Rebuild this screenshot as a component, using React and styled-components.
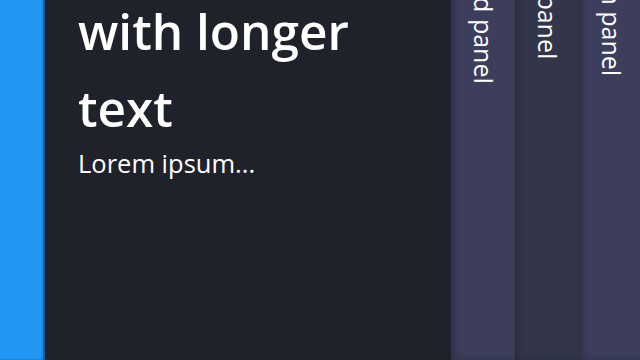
import React, { useLayoutEffect, useRef } from 'react';
import styled, { createGlobalStyle } from 'styled-components';

const GlobalStyle = createGlobalStyle`
  html, body {
    margin: 0;
    padding: 0;
    background: #1f212b;
    font-family: "Open Sans", "Liberation Sans", sans-serif;
    overflow: hidden;
  }
`;

const Viewport = styled.div`
  height: 100vh;
  overflow: hidden;
`;

const Stage = styled.div`
  display: flex;
  height: 444px;
`;

const SideBar = styled.div`
  flex: 0 0 45px;
  background: #2196f3;
  box-shadow: inset -2px 0 2px rgba(10, 40, 80, 0.55);
`;

const Expanded = styled.section`
  flex: 0 0 406px;
  box-sizing: border-box;
  background: #1f212b;
  color: #fff;
  padding: 0 33px;
`;

const Heading = styled.h1`
  margin: 0;
  font-size: 49.5px;
  font-weight: 600;
  line-height: 77px;
`;

const Body = styled.p`
  margin: 0;
  font-size: 25.5px;
  line-height: 1.3;
`;

const Collapsed = styled.div`
  flex: 0 0 ${p => p.$width}px;
  box-sizing: border-box;
  display: flex;
  justify-content: center;
  padding-top: 11px;
  background: ${p => (p.$dim ? '#33364b' : '#3c3e5b')};
  box-shadow: inset 3px 0 6px rgba(20, 22, 35, 0.35);
`;

const Label = styled.span`
  writing-mode: vertical-rl;
  color: #fff;
  font-size: 25px;
  line-height: 1;
  white-space: nowrap;
`;

const panels = [
  { title: 'Second panel', width: 64 },
  { title: 'Third panel', width: 64, dim: true },
  { title: 'Fourth panel', width: 64 },
];

export default function App() {
  const viewRef = useRef(null);

  // the shot is taken part way down the page
  useLayoutEffect(() => {
    if (viewRef.current) viewRef.current.scrollTop = 84;
  }, []);

  return (
    <>
      <GlobalStyle />
      <Viewport ref={viewRef}>
        <Stage>
          <SideBar />
          <Expanded>
            <Heading>First panel with longer text</Heading>
            <Body>Lorem ipsum...</Body>
          </Expanded>
          {panels.map(p => (
            <Collapsed key={p.title} $width={p.width} $dim={p.dim}>
              <Label>{p.title}</Label>
            </Collapsed>
          ))}
        </Stage>
      </Viewport>
    </>
  );
}
